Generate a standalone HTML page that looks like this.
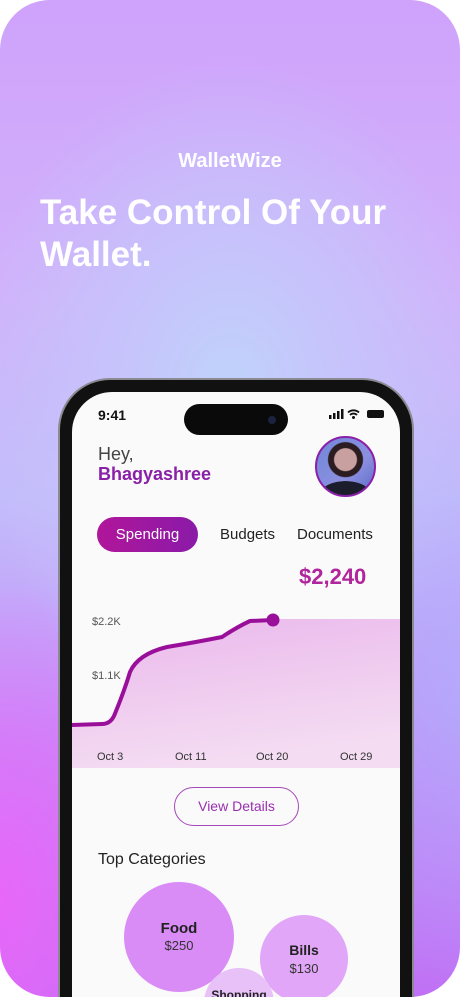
<!DOCTYPE html>
<html><head><style>
*{margin:0;padding:0;box-sizing:border-box}
html,body{width:460px;height:997px;background:#fff;overflow:hidden;font-family:"Liberation Sans",sans-serif}
.wrap{position:relative;width:460px;height:997px;overflow:hidden}
.bg{position:absolute;left:0;top:0;width:460px;height:997px;border-radius:50px;overflow:hidden;
background:
radial-gradient(ellipse 200px 320px at 0px 900px,rgba(238,100,250,.85) 0%,rgba(230,110,250,0) 100%),
radial-gradient(ellipse 160px 300px at 460px 700px,rgba(175,175,252,.7) 0%,rgba(175,175,252,0) 100%),
radial-gradient(ellipse 260px 330px at 230px 390px,#c0d2fb 0%,#c6c4fb 40%,rgba(200,170,250,0) 100%),
linear-gradient(180deg,#cfa2fb 0%,#d1b2fb 30%,#c3bcfb 50%,#c38cf8 75%,#c070f5 100%);}
.t{position:absolute;color:#fff;font-weight:bold}
.phone{position:absolute;left:58px;top:378px;width:356px;height:619px;border-radius:52px 52px 0 0;background:#111;border:2px solid #8a8a90;border-bottom:0;z-index:2}
.screen{position:absolute;left:72px;top:392px;width:328px;height:605px;border-radius:40px 40px 0 0;background:#fafafa;overflow:hidden;z-index:3}
.a{position:absolute;white-space:nowrap}
</style></head><body><div class="wrap">
<div class="bg"></div>
<div class="t" style="left:0;width:460px;text-align:center;top:150px;font-size:20px;z-index:1">WalletWize</div>
<div class="t" style="left:40px;top:192px;font-size:35px;line-height:42px;z-index:1">Take Control Of Your<br>Wallet.</div>
<div class="phone"></div>
<div class="screen">
 <div class="a" style="left:26px;top:15px;font-size:14px;font-weight:bold;color:#111">9:41</div>
 <div class="a" style="left:112px;top:12px;width:104px;height:31px;border-radius:16px;background:#0a0a0a"></div>
 <div class="a" style="left:196px;top:24px;width:8px;height:8px;border-radius:4px;background:#1c2340"></div>
 <svg class="a" style="left:255px;top:16px" width="62" height="12" viewBox="0 0 62 12">
  <rect x="2" y="7" width="2.5" height="4" fill="#111"/><rect x="6" y="5" width="2.5" height="6" fill="#111"/><rect x="10" y="3" width="2.5" height="8" fill="#111"/><rect x="14" y="1" width="2.5" height="10" fill="#111"/>
  <path d="M21 4.5a8 8 0 0 1 11 0M23 7a5 5 0 0 1 7 0" stroke="#111" stroke-width="1.8" fill="none"/><circle cx="26.5" cy="9.5" r="1.5" fill="#111"/>
  <rect x="40" y="2" width="17" height="8" rx="2" fill="#111"/>
 </svg>
 <div class="a" style="left:26px;top:52px;font-size:18px;color:#444">Hey,</div>
 <div class="a" style="left:26px;top:72px;font-size:18px;font-weight:bold;color:#8a1fa8">Bhagyashree</div>
 <div class="a" style="left:243px;top:44px;width:61px;height:61px;border-radius:50%;border:2px solid #8a1fa8;background:radial-gradient(circle at 50% 38%,#c9a0a0 0 11px,#2a1c20 12px 17px,rgba(0,0,0,0) 18px),radial-gradient(ellipse 26px 14px at 50% 100%,#1b1d2c 0 98%,rgba(0,0,0,0) 100%),linear-gradient(135deg,#6f87d8,#8c8fe0 60%,#5a6dc6)"></div>
 <div class="a" style="left:25px;top:125px;width:101px;height:35px;border-radius:18px;background:linear-gradient(90deg,#b0169a,#8a1aa8);color:#fff;font-size:15px;text-align:center;line-height:35px">Spending</div>
 <div class="a" style="left:148px;top:134px;font-size:15px;color:#222">Budgets</div>
 <div class="a" style="left:225px;top:134px;font-size:15px;color:#222">Documents</div>
 <div class="a" style="left:227px;top:172px;font-size:22px;font-weight:bold;color:#b0249c">$2,240</div>
 <svg class="a" style="left:0;top:220px" width="328" height="157" viewBox="0 0 328 157">
  <defs><linearGradient id="g" x1="0" y1="0" x2="0.3" y2="1"><stop offset="0" stop-color="#eab8ec"/><stop offset="1" stop-color="#f4dcf2"/></linearGradient></defs>
  <path d="M0 113 L30 112 Q38 112 42 104 Q52 80 58 60 Q66 42 95 35 Q125 30 150 25 Q165 18 175 8 L201 7 L328 7 L328 156 L0 156Z" fill="url(#g)"/>
  <path d="M0 113 L30 112 Q38 112 42 104 Q52 80 58 60 Q66 42 95 35 Q125 30 150 25 Q165 15 178 9 L201 8" stroke="#9a0f9a" stroke-width="4" fill="none" stroke-linecap="round"/>
  <circle cx="201" cy="8" r="6.5" fill="#9a0f9a"/>
 </svg>
 <div class="a" style="left:20px;top:224px;font-size:11px;color:#555">$2.2K</div>
 <div class="a" style="left:20px;top:278px;font-size:11px;color:#555">$1.1K</div>
 <div class="a" style="left:25px;top:359px;font-size:11px;color:#333">Oct 3</div>
 <div class="a" style="left:103px;top:359px;font-size:11px;color:#333">Oct 11</div>
 <div class="a" style="left:184px;top:359px;font-size:11px;color:#333">Oct 20</div>
 <div class="a" style="left:268px;top:359px;font-size:11px;color:#333">Oct 29</div>
 <div class="a" style="left:102px;top:395px;width:125px;height:39px;border:1.5px solid #a548b8;border-radius:20px;text-align:center;line-height:36px;font-size:14px;color:#9a2fb0">View Details</div>
 <div class="a" style="left:26px;top:459px;font-size:16px;color:#222">Top Categories</div>
 <div class="a" style="left:52px;top:490px;width:110px;height:110px;border-radius:50%;background:#d98bf6;text-align:center;padding-top:38px;font-size:14px;color:#333"><b style="color:#222;font-size:15px">Food</b><br><span style="font-size:13px;line-height:13px">$250</span></div>
 <div class="a" style="left:188px;top:523px;width:88px;height:88px;border-radius:50%;background:#e1a6f7;text-align:center;padding-top:27px;color:#333"><b style="color:#222;font-size:14px">Bills</b><br><span style="font-size:13px">$130</span></div>
 <div class="a" style="left:132px;top:576px;width:70px;height:70px;border-radius:50%;background:#e7c1f8;text-align:center;padding-top:20px;font-size:12px;font-weight:bold;color:#222">Shopping</div>
</div>
</div></body></html>
